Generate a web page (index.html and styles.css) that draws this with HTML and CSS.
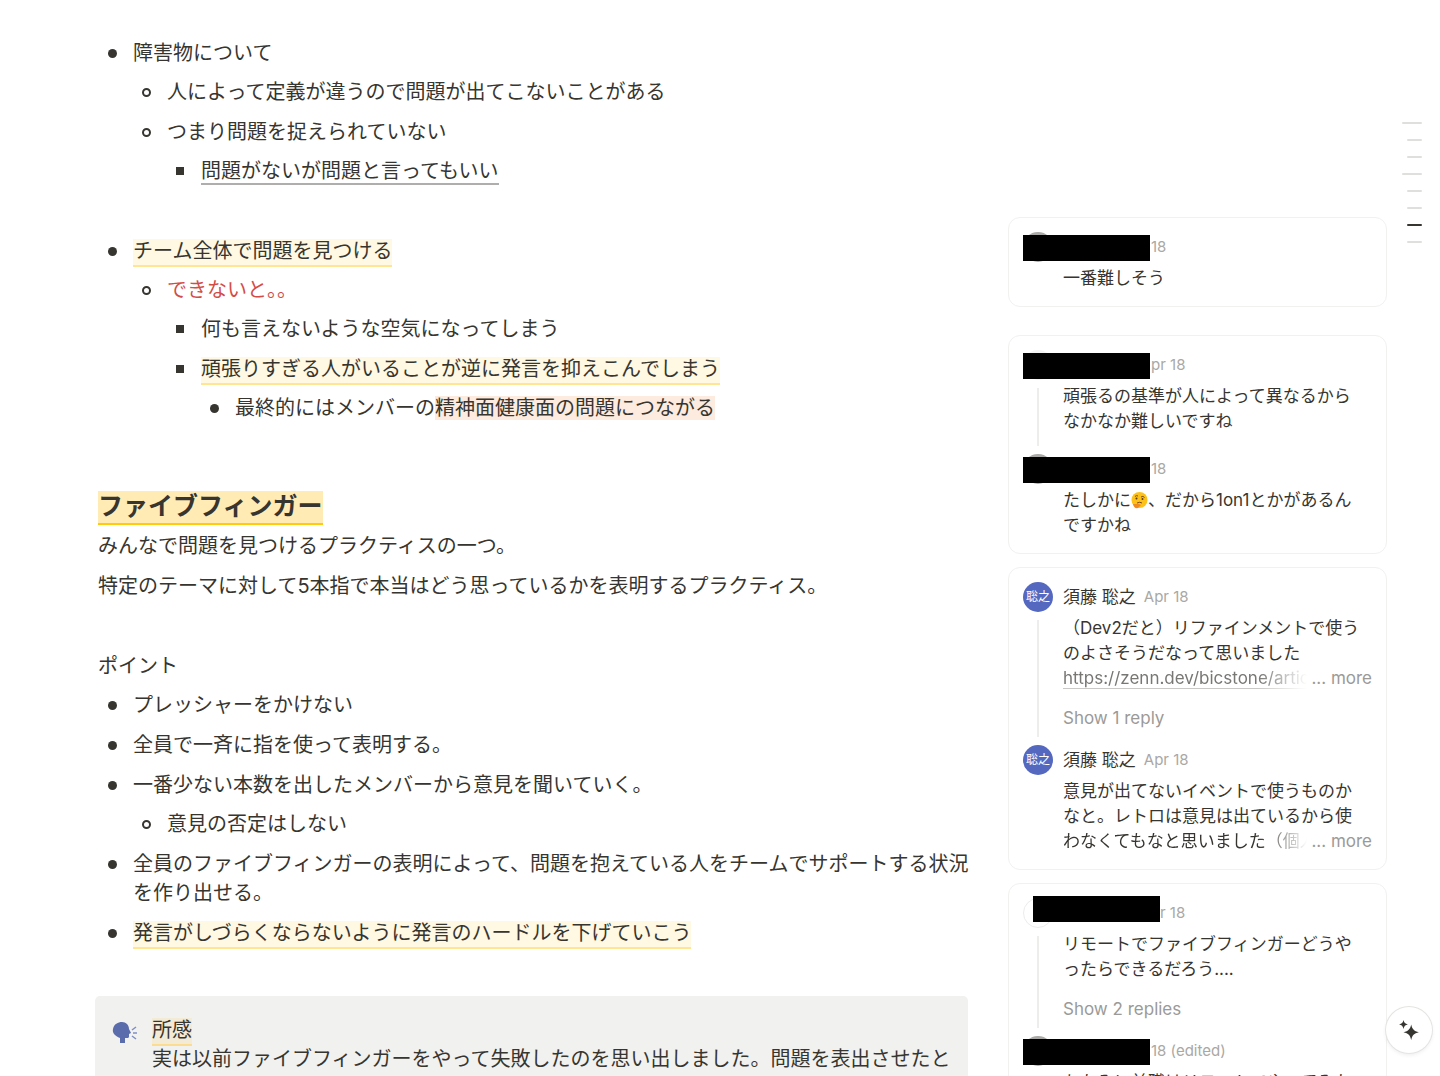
FILE: index.html
```
<!DOCTYPE html>
<html lang="ja">
	<head>
		<meta charset="utf-8">
		<title>ファイブフィンガー</title>
		<link rel="stylesheet" href="styles.css">
	</head>
	<body>
		<div class="page">
			<main class="doc">
				<ul class="list">
					<li>障害物について
						<ul class="circle">
							<li>人によって定義が違うので問題が出てこないことがある</li>
							<li>つまり問題を捉えられていない
								<ul class="square">
									<li><span class="underline">問題がないが問題と言ってもいい</span></li>
								</ul>
							</li>
						</ul>
					</li>
				</ul>
				<ul class="list spaced">
					<li><mark class="commented">チーム全体で問題を見つける</mark>
						<ul class="circle">
							<li><span class="red">できないと。。</span>
								<ul class="square">
									<li>何も言えないような空気になってしまう</li>
									<li><mark class="commented">頑張りすぎる人がいることが逆に発言を抑えこんでしまう</mark>
										<ul class="disc">
											<li>最終的にはメンバーの<mark class="orange">精神面健康面の問題につながる</mark></li>
										</ul>
									</li>
								</ul>
							</li>
						</ul>
					</li>
				</ul>

				<h2><mark class="commented active">ファイブフィンガー</mark></h2>
				<p>みんなで問題を見つけるプラクティスの一つ。</p>
				<p>特定のテーマに対して5本指で本当はどう思っているかを表明するプラクティス。</p>
				<p class="spaced">ポイント</p>
				<ul class="list">
					<li>プレッシャーをかけない</li>
					<li>全員で一斉に指を使って表明する。</li>
					<li>一番少ない本数を出したメンバーから意見を聞いていく。
						<ul class="circle">
							<li>意見の否定はしない</li>
						</ul>
					</li>
					<li>全員のファイブフィンガーの表明によって、問題を抱えている人をチームでサポートする状況を作り出せる。</li>
					<li><mark class="commented">発言がしづらくならないように発言のハードルを下げていこう</mark></li>
				</ul>

				<div class="callout">
					<svg class="speaking" viewBox="0 0 26 24" aria-hidden="true">
						<path d="M8 22 V17 C3 15 0 12 1 8 C2 3 6 1 10 1 C14 1 17 4 17 8 L19 12 L17 13 V16 C17 17 15 17 13 17 V22 Z" fill="#5a6cab"/>
						<path d="M20 9 L24 6 M21 12 H25 M20 15 L24 18" stroke="#7f8fc4" stroke-width="1.5" fill="none"/>
					</svg>
					<div class="calloutText">
						<mark class="commented">所感</mark><br>
						実は以前ファイブフィンガーをやって失敗したのを思い出しました。問題を表出させたと
					</div>
				</div>
			</main>

			<aside class="comments">
				<section class="card apart">
					<article class="comment redacted">
						<div class="rail"><div class="avatar dark"></div></div>
						<div class="content">
							<div class="head"><span class="date">18</span></div>
							<div class="text">一番難しそう</div>
						</div>
					</article>
				</section>

				<section class="card">
					<article class="comment redacted">
						<div class="rail"><div class="avatar light"></div><div class="thread"></div></div>
						<div class="content">
							<div class="head"><span class="date">pr 18</span></div>
							<div class="text">頑張るの基準が人によって異なるからなかなか難しいですね</div>
						</div>
					</article>
					<article class="comment redacted">
						<div class="rail"><div class="avatar dark"></div></div>
						<div class="content">
							<div class="head"><span class="date">18</span></div>
							<div class="text">たしかに<svg class="thinking" viewBox="0 0 17 17" role="img" aria-label="thinking"><circle cx="8.5" cy="8" r="8" fill="#fcc21b"/><path d="M4 4.500 Q5.500 3 7 4 M10 5 Q12 3.500 13.500 5.500 M6 11 Q9 9.500 11 11" stroke="#7a4a14" stroke-width="1" fill="none"/><circle cx="5.500" cy="6.500" r="1" fill="#5d3a12"/><circle cx="11.500" cy="7" r="1" fill="#5d3a12"/><path d="M2 12 L8 12 L10 13 L7 16 Q3 17 2 12" fill="#f08a1c"/></svg>、だから1on1とかがあるんですかね</div>
						</div>
					</article>
				</section>

				<section class="card">
					<article class="comment hasReplies">
						<div class="rail"><div class="avatar blue">聡之</div><div class="thread"></div></div>
						<div class="content">
							<div class="head"><span class="name">須藤 聡之</span><span class="date">Apr 18</span></div>
							<div class="text">（Dev2だと）リファインメントで使うのよさそうだなって思いました</div>
							<div class="clipped">
								<span class="fade"><a href="#">https://zenn.dev/bicstone/articl</a></span>
								<button class="more">... more</button>
							</div>
							<button class="replies">Show 1 reply</button>
						</div>
					</article>
					<article class="comment">
						<div class="rail"><div class="avatar blue">聡之</div></div>
						<div class="content">
							<div class="head"><span class="name">須藤 聡之</span><span class="date">Apr 18</span></div>
							<div class="text">意見が出てないイベントで使うものかなと。レトロは意見は出ているから使</div>
							<div class="clipped">
								<span class="fade">わなくてもなと思いました（個人</span>
								<button class="more">... more</button>
							</div>
						</div>
					</article>
				</section>

				<section class="card">
					<article class="comment redacted shifted hasReplies">
						<div class="rail"><div class="avatar outline"></div><div class="thread"></div></div>
						<div class="content">
							<div class="head"><span class="date">r 18</span></div>
							<div class="text">リモートでファイブフィンガーどうやったらできるだろう....</div>
							<button class="replies">Show 2 replies</button>
						</div>
					</article>
					<article class="comment redacted">
						<div class="rail"><div class="avatar dark"></div></div>
						<div class="content">
							<div class="head"><span class="date">18 (edited)</span></div>
							<div class="text">ちなみに前職はリモートでやってみた</div>
						</div>
					</article>
				</section>
			</aside>
		</div>

		<nav class="outline-nav" aria-label="Table of contents">
			<a href="#" class="top"></a>
			<a href="#"></a>
			<a href="#"></a>
			<a href="#" class="top"></a>
			<a href="#"></a>
			<a href="#"></a>
			<a href="#" class="current"></a>
			<a href="#"></a>
		</nav>

		<button class="ai" aria-label="AI">
			<svg viewBox="0 0 20 20" aria-hidden="true">
				<path d="M12 5 C12.800 9 14.500 11 19 12 C14.500 13 12.800 15 12 19 C11.200 15 9.500 13 5 12 C9.500 11 11.200 9 12 5 Z"/>
				<path d="M5 1 C5.500 3.500 6.500 4.500 9 5 C6.500 5.500 5.500 6.500 5 9 C4.500 6.500 3.500 5.500 1 5 C3.500 4.500 4.500 3.500 5 1 Z"/>
			</svg>
		</button>
	</body>
</html>
```
FILE: styles.css
```
* {
	box-sizing: border-box;
}
body {
	margin: 0;
	height: 100vh;
	overflow: hidden;
	background: #fff;
	color: #37352f;
	font-family: Inter, "Noto Sans CJK JP", sans-serif;
	font-size: 20px;
	line-height: 29px;
}
button {
	border: 0;
	padding: 0;
	background: none;
	font: inherit;
	cursor: pointer;
}
mark {
	background: none;
	color: inherit;
}

/* document */
.page {
	display: flex;
	gap: 40px;
	padding: 0 53px 0 95px;
}
.doc {
	flex: 1;
	min-width: 0;
	padding-top: 39px;
}
.doc ul {
	list-style: none;
	margin: 0;
	padding: 0 0 0 35px;
}
.doc > ul,
.doc > p,
.doc > h2 {
	margin: 0 -8px 0 3px;
}
.doc li {
	position: relative;
}
.doc li + li {
	margin-top: 11px;
}
.doc li > ul {
	margin-top: 10px;
	padding-left: 34px;
}
.doc li::before {
	content: "";
	box-sizing: border-box;
	position: absolute;
	left: -25px;
	top: 10px;
	width: 9px;
	height: 9px;
	border-radius: 50%;
	background: #37352f;
}
.doc .circle > li::before {
	border: 2px solid #37352f;
	background: none;
}
.doc .square > li::before {
	width: 8px;
	height: 8px;
	border-radius: 0;
	background: #37352f;
	border: 0;
}
.doc .disc > li::before {
	width: 9px;
	height: 9px;
	border-radius: 50%;
	background: #37352f;
	border: 0;
}
.doc > p {
	margin-top: 11px;
}
.doc > p + .list {
	margin-top: 10px;
}
.doc > .spaced {
	margin-top: 51px;
}
.doc > h2 {
	margin-top: 65px;
	font-size: 25px;
	line-height: 36px;
	font-weight: 700;
}
.doc > h2 + p {
	margin-top: 8px;
}
.underline {
	border-bottom: 2px solid #afaeac;
}
.red {
	color: #d44c47;
}
.commented {
	padding-bottom: 2px;
	background: #fff8e3;
	border-bottom: 2px solid #ffe594;
}
.commented.active {
	background: #ffebb3;
	border-bottom-color: #ffcb0a;
}
.orange {
	background: #fcebde;
}
.callout {
	display: flex;
	gap: 14px;
	margin-top: 48px;
	padding: 20px 16px 20px 17px;
	border-radius: 5px;
	background: #f1f1ef;
}
.callout .commented {
	background: #f3ebd6;
	border-bottom-color: #fbdc91;
}
.speaking {
	flex: none;
	width: 26px;
	height: 24px;
	margin-top: 5px;
}

/* comments */
.comments {
	flex: none;
	width: 379px;
	padding-top: 217px;
	font-size: 17px;
	line-height: 25px;
}
.card {
	margin-bottom: 13px;
	padding: 14px 14px 0;
	border: 1px solid #f1f1f0;
	border-radius: 12px;
}
.card.apart {
	margin-bottom: 28px;
}
.comment {
	position: relative;
	display: flex;
	gap: 10px;
}
.rail {
	display: flex;
	flex-direction: column;
	flex: none;
	width: 30px;
}
.avatar {
	flex: none;
	height: 30px;
	border-radius: 50%;
	font-size: 12px;
	line-height: 30px;
	text-align: center;
	color: #fff;
}
.avatar.blue {
	background: #5468c0;
}
.avatar.dark {
	background: #aaa9a8;
}
.avatar.light {
	background: #f4f4f4;
}
.avatar.outline {
	border: 1px solid #ececec;
}
.thread {
	flex: 1;
	width: 2px;
	margin: 8px auto;
	background: #ededec;
}
.content {
	flex: 1;
	min-width: 0;
	padding-bottom: 20px;
}
.comment:last-child .content {
	padding-bottom: 15px;
}
.comment.hasReplies .content {
	padding-bottom: 0;
}
.head {
	display: flex;
	gap: 8px;
	height: 30px;
	margin-bottom: 4px;
	line-height: 30px;
}
.date {
	font-size: 15px;
	color: #a9a8a5;
}
.redacted .head {
	padding-left: 88px;
}
.redacted::before {
	content: "";
	position: absolute;
	left: 0;
	top: 3px;
	width: 127px;
	height: 26px;
	background: #000;
}
.redacted.shifted .head {
	padding-left: 97px;
}
.redacted.shifted::before {
	left: 10px;
	top: -2px;
}
.text {
	margin-right: 8px;
	line-break: anywhere;
}
.thinking {
	width: 17px;
	height: 17px;
	vertical-align: -3px;
}
.clipped {
	display: flex;
	gap: 4px;
}
.fade {
	flex: 1;
	overflow: hidden;
	white-space: nowrap;
	mask-image: linear-gradient(to right, #000 80%, transparent);
}
.fade a {
	color: #787774;
	text-decoration: none;
	border-bottom: 1px solid #c9c8c6;
}
.more,
.replies {
	color: #9b9a97;
}
.replies {
	display: block;
	height: 54px;
}

/* floating */
.outline-nav {
	position: fixed;
	right: 18px;
	top: 122px;
	display: flex;
	flex-direction: column;
	align-items: flex-end;
	gap: 15px;
}
.outline-nav a {
	width: 15px;
	height: 2px;
	border-radius: 2px;
	background: #dfdfdc;
}
.outline-nav .top {
	width: 20px;
}
.outline-nav .current {
	background: #37352f;
}
.ai {
	position: fixed;
	right: 8px;
	bottom: 23px;
	display: flex;
	align-items: center;
	justify-content: center;
	width: 46px;
	height: 46px;
	border-radius: 50%;
	background: #fff;
	box-shadow: 0 0 0 1px #e4e4e2, 0 2px 4px #00000014;
}
.ai svg {
	width: 22px;
	height: 22px;
	fill: #37352f;
}
```
